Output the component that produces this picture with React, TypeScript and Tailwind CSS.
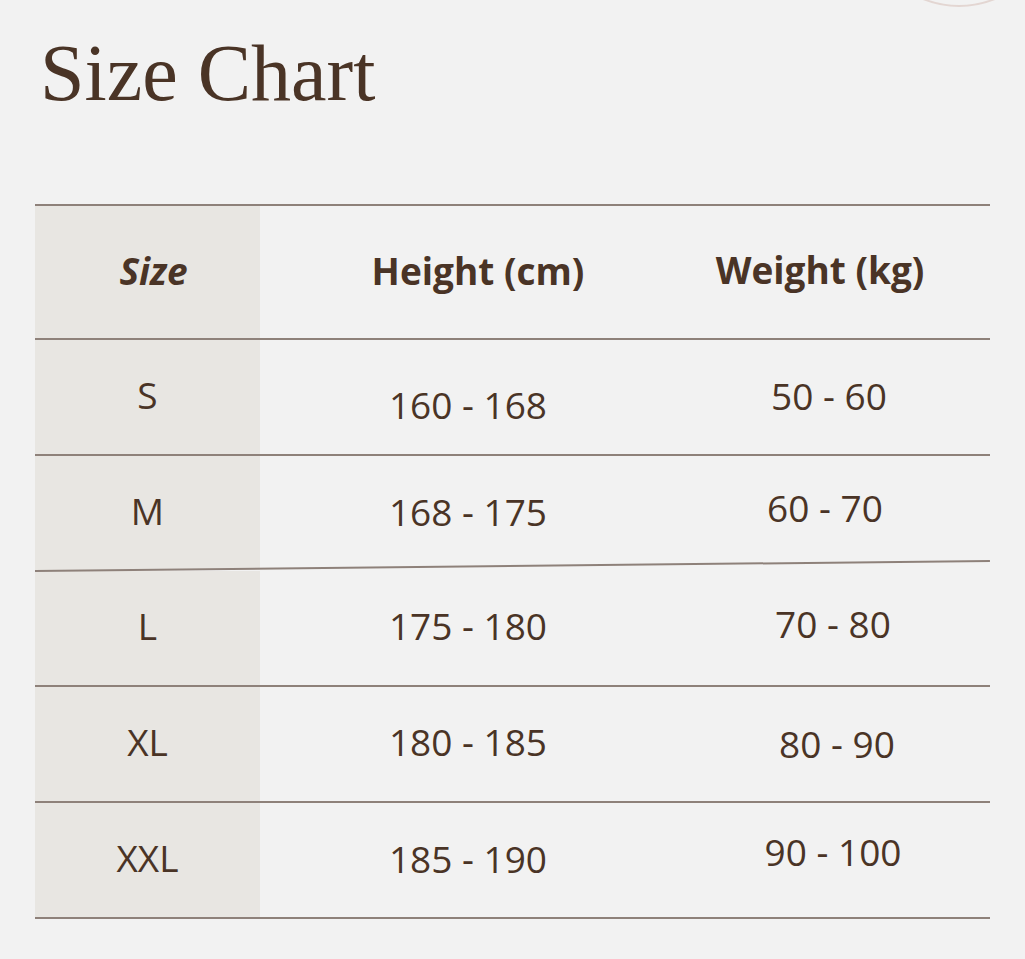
const rows = [
  { size: "S", height: "160 - 168", weight: "50 - 60", hCls: "mt-[16px]", wCls: "mr-[8px] mb-[2px]", line: "" },
  { size: "M", height: "168 - 175", weight: "60 - 70", hCls: "mb-[2px]", wCls: "mr-[16px] mb-[10px]", line: "" },
  { size: "L", height: "175 - 180", weight: "70 - 80", hCls: "mb-[4px]", wCls: "mb-[8px]", line: "tilt" },
  { size: "XL", height: "180 - 185", weight: "80 - 90", hCls: "mb-[4px]", wCls: "ml-[8px]", line: "" },
  { size: "XXL", height: "185 - 190", weight: "90 - 100", hCls: "mb-[2px]", wCls: "mb-[16px]", line: "" },
];

const App: React.FC = () => {
  return (
    <div className="relative min-h-screen overflow-hidden bg-[#f2f2f2] text-[#4a3426] font-['Open_Sans',sans-serif]">
      {/* faint circle peeking in at the top right */}
      <div className="absolute left-[863px] top-[-185px] h-[192px] w-[192px] rounded-full border-2 border-[#e3d6d2]"></div>

      <h1 className="pl-[40px] pt-[33px] font-['Liberation_Serif',serif] text-[80px] leading-none font-normal">
        Size Chart
      </h1>

      <div className="ml-[35px] mt-[91px] w-[955px]">
        <div className="h-[2px] bg-[#8e817a]"></div>
        <div className="flex h-[132px]">
          <div className="flex w-[225px] items-center justify-center bg-[#e8e6e2] text-[37px] font-bold italic">
            <span className="ml-[12px] mb-[3px]">Size</span>
          </div>
          <div className="flex w-[416px] items-center justify-center text-[37px] font-bold">
            <span className="ml-[20px] mb-[3px]">Height (cm)</span>
          </div>
          <div className="flex flex-1 items-center justify-center text-[37px] font-bold mb-[4px] mr-[26px]">
            Weight (kg)
          </div>
        </div>

        {rows.map((r) => (
          <div key={r.size}>
            {r.line === "tilt" ? (
              <div className="relative h-[1px]">
                <div className="h-[2px] origin-left -rotate-[0.6deg] bg-[#8e817a]"></div>
              </div>
            ) : (
              <div className="h-[2px] bg-[#8e817a]"></div>
            )}
            <div className="flex h-[114px] text-[37px]">
              <div className="flex w-[225px] items-center justify-center bg-[#e8e6e2]">
                <span className="mb-[4px]">{r.size}</span>
              </div>
              <div className="flex w-[416px] items-center justify-center">
                <span className={r.hCls}>{r.height}</span>
              </div>
              <div className="flex flex-1 items-center justify-center">
                <span className={r.wCls}>{r.weight}</span>
              </div>
            </div>
          </div>
        ))}
        <div className="h-[2px] bg-[#8e817a]"></div>
      </div>
    </div>
  );
};

export default App;
